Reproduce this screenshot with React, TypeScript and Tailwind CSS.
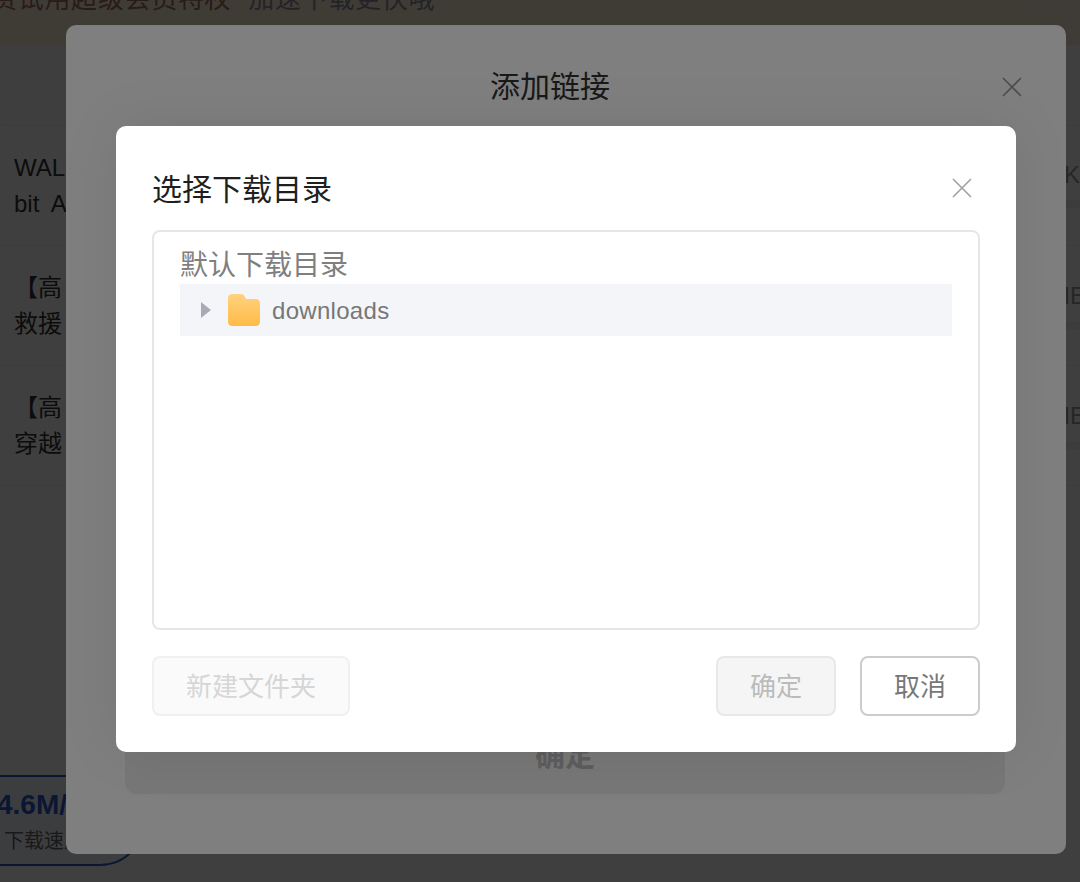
const fontStack = "font-['Liberation_Sans','Noto_Sans_CJK_SC',sans-serif]";

function CloseIcon({ className }: { className: string }) {
  return (
    <svg className={className} viewBox="0 0 20 20" fill="none" stroke="currentColor" strokeWidth="1.6">
      <path d="M1 1l18 18M19 1L1 19" />
    </svg>
  );
}

function FolderIcon() {
  return (
    <svg width="32" height="32" viewBox="0 0 32 32" className="shrink-0">
      <defs>
        <linearGradient id="folder-fill" x1="0" y1="0" x2="0" y2="1">
          <stop offset="0" stopColor="#ffd27e" />
          <stop offset="1" stopColor="#ffbb48" />
        </linearGradient>
      </defs>
      <path
        d="M4 0h9c1.600 0 2.600.7 3.400 2l1.300 2.200c.3.500.7.800 1.300.8H28c2.200 0 4 1.800 4 4v19c0 2.200-1.800 4-4 4H4c-2.200 0-4-1.800-4-4V4c0-2.200 1.800-4 4-4z"
        fill="url(#folder-fill)"
      />
    </svg>
  );
}

function BackgroundRow({ lines, unit, unitClass }: { lines: string[]; unit: string; unitClass: string }) {
  return (
    <div className="flex h-[120px] items-center justify-between border-b border-[#f2f2f2] pl-[14px]">
      <div className="text-[24px] leading-[36px] text-[#333] [word-spacing:6px]">
        {lines.map((line) => (
          <div key={line} className="whitespace-nowrap">
            {line}
          </div>
        ))}
      </div>
      <div className="w-[32px] self-start pt-[34px]">
        <div className={`text-[24px] leading-[30px] text-[#999] whitespace-nowrap ${unitClass}`}>{unit}</div>
        <div className="mt-[10px] h-[8px] bg-[#f2f2f2]" />
      </div>
    </div>
  );
}

export default function App() {
  return (
    <div className={`relative h-[882px] w-[1080px] overflow-hidden bg-white ${fontStack}`}>
      <div className="flex h-[45px] items-end bg-gradient-to-r from-[#fff0d8] to-[#fdf0dc] pb-[28px] text-[26px] leading-[36px]">
        <span className="ml-[-9px] whitespace-nowrap tracking-[0.7px] text-[#a5705c]">费试用超级会员特权</span>
        <span className="ml-[17px] whitespace-nowrap tracking-[0.7px] text-[#8f8f9f]">加速下载更快哦</span>
      </div>
      <div className="h-[80px] bg-gradient-to-r from-[#f9fbfe] to-white" />
      <div className="border-t border-[#f2f2f2]">
        <BackgroundRow lines={["WAL", "bit A"]} unit="KB" unitClass="pl-[16px]" />
        <BackgroundRow lines={["【高", "救援"]} unit="MB" unitClass="pl-[2px] pt-[1px]" />
        <BackgroundRow lines={["【高", "穿越"]} unit="MB" unitClass="pl-[2px] pt-[1px]" />
      </div>

      <div className="absolute left-[-60px] top-[775px] flex h-[91px] w-[205px] flex-col justify-center rounded-[45px] border-2 border-[#2f5fc8] bg-[#f3f7ff] pl-[55px]">
        <div className="whitespace-nowrap text-[28px] font-bold leading-[36px] text-[#2f5fc8]">4.6M/s</div>
        <div className="mt-[4px] whitespace-nowrap pl-[7px] text-[20px] leading-[28px] text-[#666]">下载速度</div>
      </div>

      <div className="absolute inset-0 bg-black/50" />

      <div className="absolute left-[66px] top-[25px] flex h-[829px] w-[1000px] flex-col items-center rounded-[10px] bg-white">
        <div className="mt-[40px] pr-[32px] text-[30px] leading-[44px] text-[#333]">添加链接</div>
        <CloseIcon className="absolute right-[44px] top-[52px] h-[20px] w-[20px] text-[#999]" />
        <div className="mt-auto mb-[60px] mr-[2px] flex h-[74px] w-[880px] items-center justify-center rounded-[12px] bg-[#eeeeee] pb-[4px] text-[30px] font-bold text-[#bbbbbb]">
          确定
        </div>
      </div>

      <div className="absolute inset-0 bg-black/50" />

      <div className="absolute left-[116px] top-[126px] flex h-[626px] w-[900px] flex-col rounded-[10px] bg-white px-[36px] pt-[40px] shadow-[0_0_60px_rgba(0,0,0,0.08)]">
        <div className="flex h-[46px] items-center justify-between">
          <h1 className="pt-[2px] text-[30px] font-normal leading-[46px] text-[#1f1f1f]">选择下载目录</h1>
          <CloseIcon className="mb-[2px] mr-[8px] h-[20px] w-[20px] text-[#a0a0a0]" />
        </div>
        <div className="mt-[18px] h-[400px] rounded-[8px] border-2 border-[#e6e6e6] px-[26px] pt-[14px]">
          <div className="h-[38px] pt-[1px] text-[28px] leading-[38px] text-[#7f7f7f]">默认下载目录</div>
          <div className="flex h-[52px] items-center bg-[#f4f5f9] pl-[21px]">
            <div className="h-0 w-0 border-y-[8px] border-l-[10px] border-y-transparent border-l-[#a8aab8]" />
            <div className="ml-[17px]">
              <FolderIcon />
            </div>
            <span className="ml-[12px] pt-[2px] text-[24px] tracking-[0.3px] text-[#777]">downloads</span>
          </div>
        </div>
        <div className="mt-[26px] flex items-center">
          <button className="h-[60px] w-[198px] rounded-[8px] border-2 border-[#f0f0f0] bg-[#fafafa] pt-[2px] text-[26px] text-[#d6d6d6]">
            新建文件夹
          </button>
          <button className="ml-auto h-[60px] w-[120px] rounded-[8px] border-2 border-[#e8e8e8] bg-[#f5f5f5] pt-[2px] text-[26px] text-[#bbbbbb]">
            确定
          </button>
          <button className="ml-[24px] h-[60px] w-[120px] rounded-[8px] border-2 border-[#cccccc] bg-white pt-[2px] text-[26px] text-[#777777]">
            取消
          </button>
        </div>
      </div>
    </div>
  );
}
